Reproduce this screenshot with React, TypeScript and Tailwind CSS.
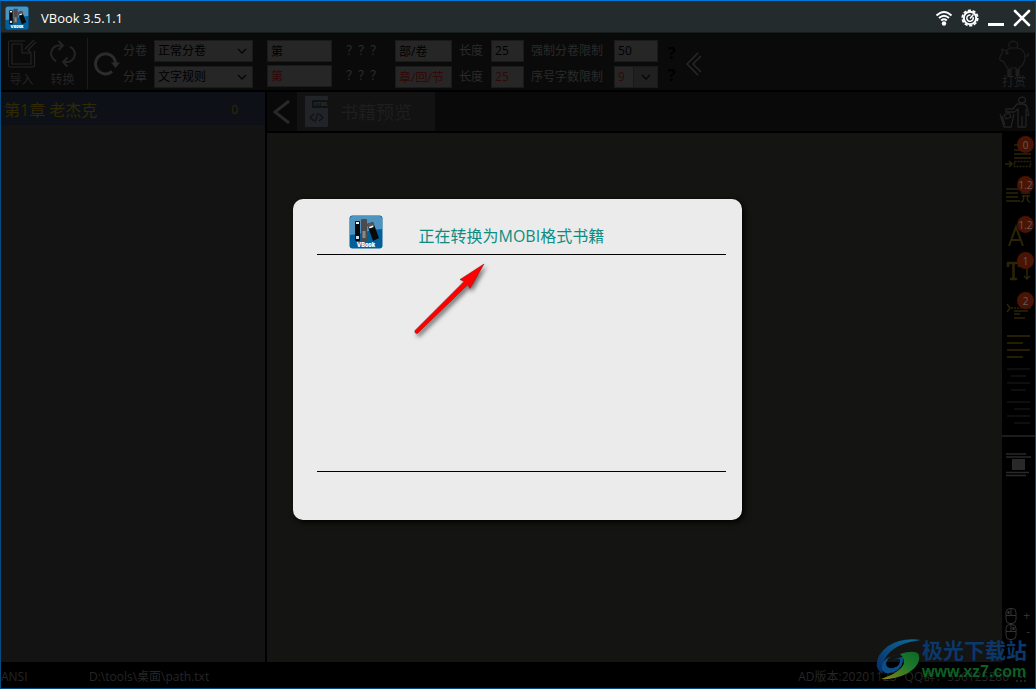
import type { ReactNode } from "react";

const FIELD =
  "block h-[22px] border border-[#1a1a1a] bg-[#262626] px-[3px] text-xs leading-4 outline-none";
const LABEL = "text-xs leading-[22px] whitespace-nowrap text-[#2b2b2b]";

function AppLogo({ className }: { className: string }) {
  return (
    <svg viewBox="0 0 34 34" className={className} aria-hidden="true">
      <rect x="0.5" y="0.5" width="33" height="33" rx="3" fill="#01609c" />
      <path d="M1 4Q1 1 4 1H30Q33 1 33 4V14Q24 14 16 17Q8 20 1 20Z" fill="#4f93bf" />
      <rect x="6" y="6" width="5" height="20" rx="1" fill="#0a0a0a" />
      <rect x="7" y="7" width="3" height="2" fill="#fff" />
      <rect x="7" y="21" width="3" height="3" fill="#ddd" />
      <rect x="12" y="4" width="6" height="22" rx="1" fill="#4b4b4b" />
      <rect x="13.5" y="16" width="3" height="7" fill="#8a8a8a" />
      <path d="M18 9L24 7L30 23L24 26Z" fill="#0a0a0a" />
      <path d="M18 9L24 7L25.5 11L19.5 13Z" fill="#555" />
      <path d="M20 12L24 10.5L24.5 12L20.5 13.5Z" fill="#fff" />
      <text x="17" y="31.5" textAnchor="middle" fontSize="5.5" fontWeight="900" fontFamily="Inter, sans-serif" fill="#fff">
        VBook
      </text>
    </svg>
  );
}

function TitleBar() {
  return (
    <header className="flex h-8 shrink-0 items-center border-b border-[#161b1c] bg-[#232b2d] pt-[2px] pr-1 pl-1">
      <AppLogo className="h-6 w-6" />
      <h1 className="ml-3 flex-1 text-[13px] leading-5 text-white">VBook 3.5.1.1</h1>
      <div className="flex items-center gap-2 text-white">
        <button type="button" aria-label="Network" className="h-[18px] w-[18px]">
          <svg viewBox="0 0 18 18" fill="none" stroke="#fff" strokeWidth="2">
            <path d="M1.5 6.5Q9 -0.5 16.5 6.5" />
            <path d="M4 9Q9 4.5 14 9" />
            <path d="M6.2 11.4Q9 9 11.8 11.4" />
            <circle cx="9" cy="14.5" r="2.2" fill="#fff" stroke="none" />
          </svg>
        </button>
        <button type="button" aria-label="Settings" className="h-[18px] w-[18px]">
          <svg viewBox="0 0 18 18" fill="none" stroke="#fff">
            <circle cx="9" cy="9" r="6.2" strokeWidth="2" />
            <circle cx="9" cy="9" r="7.7" strokeWidth="1.8" strokeDasharray="3.2 1.64" />
            <path d="M12 8A3.2 3.2 0 1 1 9.5 6M9 9.5L12.5 5.5" strokeWidth="1.5" />
          </svg>
        </button>
        <button type="button" aria-label="Minimize" className="h-[18px] w-[18px]">
          <svg viewBox="0 0 18 18">
            <rect x="1" y="14" width="16" height="3" fill="#fff" />
          </svg>
        </button>
        <button type="button" aria-label="Close" className="h-[18px] w-[18px]">
          <svg viewBox="0 0 18 18" stroke="#fff" strokeWidth="2.6" strokeLinecap="round">
            <path d="M2 2L16 16M16 2L2 16" />
          </svg>
        </button>
      </div>
    </header>
  );
}

function ToolButton({ label, children }: { label: string; children: ReactNode }) {
  return (
    <button type="button" className="flex w-[41px] flex-col items-center gap-[3px] text-xs leading-4 text-[#242424]">
      {children}
      <span>{label}</span>
    </button>
  );
}

function RuleSelect({ id, label, value }: { id: string; label: string; value: string }) {
  return (
    <div className="flex items-center gap-[7px]">
      <label htmlFor={id} className={LABEL}>
        {label}
      </label>
      <div className="relative">
        <select id={id} className={`${FIELD} w-[99px] appearance-none text-black`}>
          <option>{value}</option>
        </select>
        <svg
          viewBox="0 0 10 6"
          className="pointer-events-none absolute top-2 right-[6px] h-[6px] w-[10px]"
          fill="none"
          stroke="#050505"
          strokeWidth="1.3"
        >
          <path d="M1 1L5 5L9 1" />
        </svg>
      </div>
    </div>
  );
}

function Toolbar() {
  return (
    <div className="flex h-[59px] shrink-0 items-center border-b-2 border-black bg-[#0a0a0a] pt-1">
      <ToolButton label="导入">
        <svg viewBox="0 0 30 30" className="h-[30px] w-[30px]" fill="none" stroke="#242424" strokeWidth="1.2">
          <path d="M18 2H3Q1.5 2 1.5 3.5V26.5Q1.5 28 3 28H26Q27.5 28 27.5 26.5V12" />
          <path d="M15 5H5V25H24V15M27 1L18 10M15 5V14H24L21 11L29 3" />
        </svg>
      </ToolButton>
      <ToolButton label="转换">
        <svg viewBox="0 0 30 30" className="h-[30px] w-[30px]" fill="none" stroke="#242424" strokeWidth="2">
          <path d="M15 23H20A8 8 0 0 0 25 10L22 7.5M15 6.5H10A8 8 0 0 0 5 19.5L8 22.5" />
          <path d="M10.5 2L15 6.5L10.5 11M19.5 18.5L15 23L19.5 27.5" />
        </svg>
      </ToolButton>
      <div className="ml-1 h-[51px] w-px bg-[#1c1c1c]" />
      <button type="button" aria-label="刷新" className="ml-[6px] h-[26px] w-[26px]">
        <svg viewBox="0 0 26 26" fill="none" stroke="#2c2c2c" strokeWidth="3">
          <path d="M18 20.5A10 10 0 1 1 21.5 12" />
          <path d="M17 11.5H26L21.5 17Z" fill="#2c2c2c" stroke="none" />
        </svg>
      </button>
      <div className="ml-[3px] flex flex-col gap-1">
        <RuleSelect id="volume-rule" label="分卷" value="正常分卷" />
        <RuleSelect id="chapter-rule" label="分章" value="文字规则" />
      </div>
      <div className="ml-[14px] flex flex-col gap-[3px]">
        <input aria-label="卷前缀" defaultValue="第" className={`${FIELD} w-[65px] text-black`} />
        <input aria-label="章前缀" defaultValue="第" className={`${FIELD} w-[65px] text-[#330707]`} />
      </div>
      <div className="ml-[14px] flex flex-col gap-[3px]">
        <span className={LABEL}>？？？</span>
        <span className={LABEL}>？？？</span>
      </div>
      <div className="ml-[13px] flex flex-col gap-1">
        <input aria-label="卷单位" defaultValue="部/卷" className={`${FIELD} w-[57px] text-black`} />
        <input aria-label="章单位" defaultValue="章/回/节" className={`${FIELD} w-[57px] text-[#330707]`} />
      </div>
      <div className="ml-[7px] flex flex-col gap-1">
        <div className="flex gap-2">
          <label htmlFor="volume-length" className={LABEL}>
            长度
          </label>
          <input id="volume-length" defaultValue="25" className={`${FIELD} w-[33px] text-black`} />
        </div>
        <div className="flex gap-2">
          <label htmlFor="chapter-length" className={LABEL}>
            长度
          </label>
          <input id="chapter-length" defaultValue="25" className={`${FIELD} w-[33px] text-[#330707]`} />
        </div>
      </div>
      <div className="ml-[7px] flex flex-col gap-1">
        <div className="flex gap-[11px]">
          <label htmlFor="volume-limit" className={LABEL}>
            强制分卷限制
          </label>
          <input id="volume-limit" defaultValue="50" className={`${FIELD} w-11 text-black`} />
        </div>
        <div className="flex gap-[11px]">
          <label htmlFor="digit-limit" className={LABEL}>
            序号字数限制
          </label>
          <div className="flex">
            <input id="digit-limit" defaultValue="9" className={`${FIELD} w-5 text-[#330707]`} />
            <button
              type="button"
              aria-label="选择字数"
              className="flex h-[22px] w-6 items-center justify-center border border-l-0 border-[#1a1a1a] bg-[#202020]"
            >
              <svg viewBox="0 0 10 6" className="h-[6px] w-[10px]" fill="none" stroke="#050505" strokeWidth="1.3">
                <path d="M1 1L5 5L9 1" />
              </svg>
            </button>
          </div>
        </div>
      </div>
      <div className="ml-[10px] flex flex-col text-base leading-[22px] font-bold text-black">
        <button type="button">?</button>
        <button type="button">?</button>
      </div>
      <button type="button" aria-label="收起" className="ml-[10px] h-6 w-4">
        <svg viewBox="0 0 16 24" fill="none" stroke="#2b2b2b" strokeWidth="1.3">
          <path d="M12 1L1 12L12 23M15 4L7 12L15 20" />
        </svg>
      </button>
      <button type="button" className="mr-[5px] ml-auto flex flex-col items-center text-xs leading-3 text-[#242424]">
        <svg viewBox="0 0 32 36" className="h-9 w-8" fill="none" stroke="#1e1e1e" strokeWidth="1.2">
          <path d="M8 11L4 9V14Q1 16 2 20L6 22Q8 27 10 28V35H13V28H18V35H21V28Q27 24 27 17Q27 9 19 8H13Q10 9 8 11ZM27 16Q31 17 30 13" />
          <path d="M12 8Q9 3 13 2Q15 0 17 2Q21 2 19 8" />
          <circle cx="9" cy="13" r="1" />
          <path d="M11 29V36M19.5 29V36" strokeWidth="3" />
        </svg>
        <span>打赏</span>
      </button>
    </div>
  );
}

function ChapterList() {
  return (
    <aside className="w-[264px] shrink-0 bg-[#131313]">
      <ul>
        <li>
          <button
            type="button"
            className="flex h-[33px] w-full items-center justify-between bg-[#0d1117] pt-[2px] pr-[27px] pl-[3px] text-base text-[#302903]"
          >
            <span>第1章 老杰克</span>
            <span className="text-xs">0</span>
          </button>
        </li>
      </ul>
    </aside>
  );
}

function PreviewBar() {
  return (
    <div className="flex h-[41px] shrink-0 items-stretch border-b-2 border-black bg-[#090909]">
      <button type="button" aria-label="返回" className="flex w-[30px] items-center justify-center">
        <svg viewBox="0 0 18 24" className="h-6 w-[18px]" fill="none" stroke="#292929" strokeWidth="3">
          <path d="M16 1L2 12L16 23" />
        </svg>
      </button>
      <button type="button" className="flex w-[138px] items-center gap-[10px] bg-[#121212] pl-2 text-lg text-[#1e1e1e]">
        <svg viewBox="0 0 25 31" className="h-[31px] w-[25px]">
          <rect width="23" height="31" rx="1" fill="#202327" />
          <rect x="7" y="4" width="18" height="8" rx="1" fill="#111214" />
          <text x="16" y="10" textAnchor="middle" fontSize="5" fontWeight="700" fontFamily="Inter, sans-serif" fill="#2a2d30">
            HTML
          </text>
          <path d="M9 18L5 21.5L9 25M14 18L18 21.5L14 25M13 17L10 26" fill="none" stroke="#101113" strokeWidth="1.2" />
        </svg>
        <span>书籍预览</span>
      </button>
      <button type="button" aria-label="清空" className="mr-1 ml-auto flex items-center">
        <svg viewBox="0 0 32 34" className="h-[34px] w-8" fill="none" stroke="#222" strokeWidth="1.3">
          <ellipse cx="23" cy="5" rx="3.5" ry="2.8" />
          <path d="M27 32V21M23 21V32H19V14L15 17H7V14H14L18 9H24Q27 9 28 12L30 20H27V14M23 32H27" />
          <path d="M1 19L5 32H12L15 19M3 21L6 30M5 20L10 18L12 22L7 24Z" />
        </svg>
      </button>
    </div>
  );
}

function BadgeButton({
  label,
  badge,
  children,
  className = "h-10",
}: {
  label: string;
  badge: string;
  children: ReactNode;
  className?: string;
}) {
  return (
    <button
      type="button"
      aria-label={label}
      className={`relative flex w-full shrink-0 items-start ${className}`}
    >
      <svg viewBox="0 0 33 36" className="h-9 w-[33px]" fill="none" stroke="#2a2507" strokeWidth="1.5">
        {children}
      </svg>
      <span className="absolute top-[3px] right-px flex h-[17px] w-[17px] items-center justify-center rounded-full bg-[#4a1405] text-[10px] leading-none text-[#5c5c5c]">
        {badge}
      </span>
    </button>
  );
}

function LinesButton({ label, path, color }: { label: string; path: string; color: string }) {
  return (
    <button type="button" aria-label={label} className="h-[34px] w-full shrink-0">
      <svg viewBox="0 0 33 34" className="h-[34px] w-[33px]" stroke={color} strokeWidth="1.5">
        <path d={path} />
      </svg>
    </button>
  );
}

function MouseRow({ sign, side }: { sign: string; side: string }) {
  return (
    <div className="flex h-4 items-center justify-between pr-[5px] pl-[3px] text-xs leading-4 text-[#333]">
      <svg viewBox="0 0 12 16" className="h-4 w-3" fill="none" stroke="#333">
        <rect x="1" y="0.5" width="10" height="15" rx="4" />
        <path d="M1 7.5H11M6 1V7.5" />
        <path d={side} strokeWidth="2" />
      </svg>
      <span>{sign}</span>
    </div>
  );
}

function FormatBar() {
  return (
    <nav className="flex w-[33px] shrink-0 flex-col bg-black">
      <BadgeButton label="首行缩进" badge="0">
        <path d="M12 12H29M12 17H29M12 21H29M12 25H29" />
        <path d="M3 31H10M7 28L10 31L7 34" />
        <rect x="12.5" y="28.5" width="16" height="5" strokeDasharray="2 1" />
      </BadgeButton>
      <BadgeButton label="行间距" badge="1.2">
        <path d="M4 16H18M4 20H16M4 24H16M4 28H18M19 17H28M19 20H28M21 22Q23 28 19 29M26 22Q24 28 28 29M20 23H28" />
      </BadgeButton>
      <BadgeButton label="字体" badge="1.2" className="h-9">
        <path d="M7 33L14 14L21 33M10 27H18" strokeWidth="2" />
      </BadgeButton>
      <BadgeButton label="字号" badge="1">
        <path d="M6 18V14H17V18M11.5 14V30M8 30H15" strokeWidth="2.5" />
        <path d="M25 18V30M22 27L25 30L28 27" />
      </BadgeButton>
      <BadgeButton label="段间距" badge="2">
        <path d="M5 15L8 19L5 23M12 22H26M12 25H18M12 29H23" />
        <path d="M9 19H29" strokeDasharray="2 1" />
      </BadgeButton>
      <LinesButton label="左对齐" color="#302904" path="M5 7H28M5 14H21M5 21H28M5 28H21" />
      <LinesButton label="居中" color="#131313" path="M5 6H28M9 13H24M5 20H28M9 27H24" />
      <LinesButton label="右对齐" color="#131313" path="M5 5H28M12 12H28M5 19H28M12 26H28" />
      <hr className="mt-1 border-t-2 border-[#1c1c1c]" />
      <button type="button" aria-label="插图" className="mt-4 h-6 w-full shrink-0">
        <svg viewBox="0 0 33 24" className="h-6 w-[33px]" fill="none" stroke="#292929" strokeWidth="1.5">
          <path d="M4 1H24M4 4H29M4 19.5H27M4 22.5H24" />
          <rect x="10" y="6" width="13" height="11" fill="#292929" stroke="none" />
        </svg>
      </button>
      <div className="mt-auto mb-[22px]">
        <MouseRow sign="+" side="M3.5 3V6" />
        <MouseRow sign="-" side="M8.5 3V6" />
      </div>
    </nav>
  );
}

function StatusBar() {
  return (
    <footer className="flex h-[26px] shrink-0 items-center bg-black pt-[3px] pr-[9px] text-xs leading-4 text-[#262626]">
      <span className="w-[88px]">ANSI</span>
      <span className="flex-1">D:\tools\桌面\path.txt</span>
      <span>AD版本:20201123</span>
      <span className="ml-2">QQ群：556125280</span>
      <svg viewBox="0 0 10 10" className="ml-[7px] h-[10px] w-[10px]" fill="#222">
        <path d="M8 0h2v2h-2zM4 4h2v2h-2zM8 4h2v2h-2zM0 8h2v2h-2zM4 8h2v2h-2zM8 8h2v2h-2z" />
      </svg>
    </footer>
  );
}

function ConvertDialog() {
  return (
    <div className="absolute inset-0 flex items-center justify-center pr-[2px] pb-[2px]">
      <section
        role="dialog"
        aria-labelledby="convert-title"
        className="relative flex w-[449px] flex-col rounded-[10px] bg-[#ebebeb] pr-4 pl-6 shadow-[2px_2px_6px_#000]"
      >
        <div className="flex h-14 items-center border-b border-black pt-[11px] pl-8">
          <AppLogo className="h-[34px] w-[34px]" />
          <h2 id="convert-title" className="ml-9 pt-2 text-base leading-6 text-[#0f8c82]">
            正在转换为MOBI格式书籍
          </h2>
        </div>
        <div className="h-[217px] border-b border-black" />
        <div className="h-12" />
        <svg viewBox="0 0 80 80" className="absolute top-[60px] left-[118px] h-20 w-20 drop-shadow-[2px_3px_2px_#0008]">
          <path
            d="M4 71.5L53 22.5L49 20.5L73 5L59 29.500L57 25.5L7 74Q5.500 75 4.500 74Q3.500 73 4 71.5Z"
            fill="#f00"
            stroke="#7a1010"
            strokeWidth="0.5"
          />
        </svg>
      </section>
    </div>
  );
}

function SiteMark() {
  return (
    <a href="#" className="absolute right-2 bottom-[6px] flex items-center">
      <svg viewBox="0 0 46 44" className="h-11 w-[46px]">
        <defs>
          <linearGradient id="swoosh-blue" x1="0" y1="1" x2="1" y2="0">
            <stop offset="0" stopColor="#0a2a66" />
            <stop offset="1" stopColor="#0b6f9c" />
          </linearGradient>
          <linearGradient id="swoosh-green" x1="0" y1="1" x2="1" y2="0">
            <stop offset="0" stopColor="#8c8410" />
            <stop offset="0.6" stopColor="#1c7a2c" />
            <stop offset="1" stopColor="#0c6626" />
          </linearGradient>
        </defs>
        <path d="M45 2Q26 -1 12 8Q-1 18 1 29Q2 33 7 36Q5 27 10 19Q19 5 45 2Z" fill="url(#swoosh-blue)" />
        <path d="M24 16Q12 17 10 25Q10 31 17 30Q25 28 24 21Q20 20 17 24Q19 20 27 19Q28 30 18 34Q9 37 6 32Q4 19 24 16Z" fill="#0b4f88" />
        <path d="M24 16Q40 11 43 17Q45 28 30 36Q18 42 5 41Q20 36 26 29Q31 22 24 16Z" fill="url(#swoosh-green)" />
      </svg>
      <span className="flex flex-col">
        <span className="text-[21px] leading-6 font-bold text-[#0b3769]">极光下载站</span>
        <span className="font-['Liberation_Sans',sans-serif] text-base leading-5 font-bold text-[#0c6024]">
          www.xz7.com
        </span>
      </span>
    </a>
  );
}

export default function App() {
  return (
    <div className="flex min-h-screen flex-col border border-[#0078d7] border-x-[#064a80] border-b-[#064a80] bg-black font-['Open_Sans','Noto_Sans_CJK_SC',sans-serif]">
      <TitleBar />
      <main className="relative flex flex-1 flex-col">
        <Toolbar />
        <div className="flex flex-1 gap-[2px]">
          <ChapterList />
          <div className="flex min-w-0 flex-1 flex-col">
            <PreviewBar />
            <div className="flex flex-1">
              <div className="flex-1 bg-[#141412]" />
              <FormatBar />
            </div>
          </div>
        </div>
        <StatusBar />
        <SiteMark />
        <ConvertDialog />
      </main>
    </div>
  );
}
